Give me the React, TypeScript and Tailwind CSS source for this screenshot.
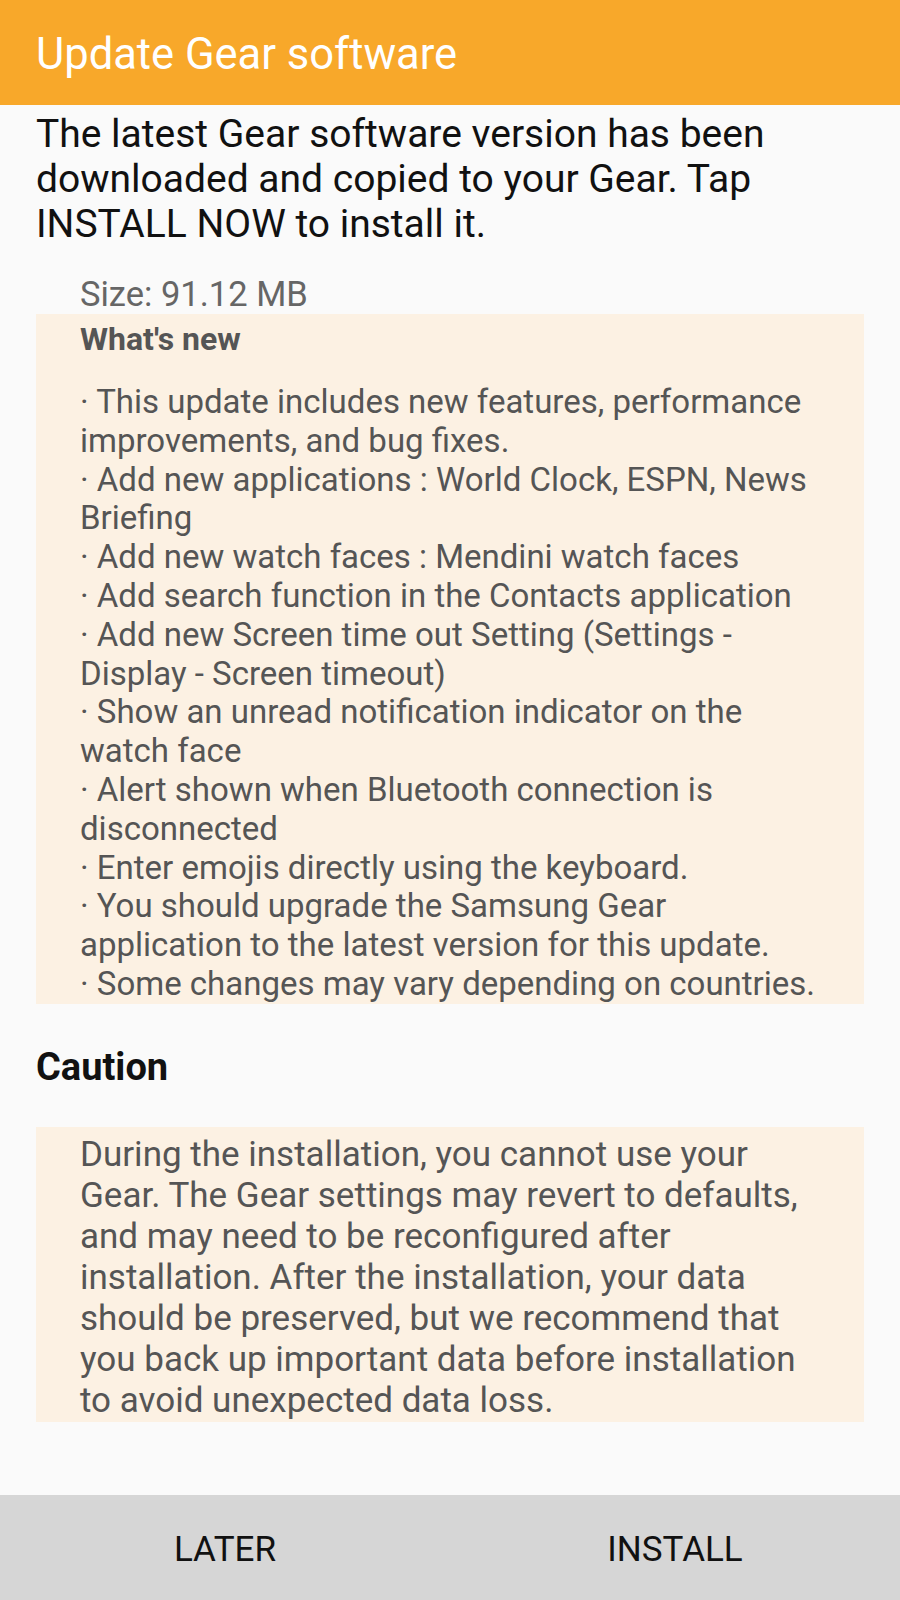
import React from "react";

const bullets = [
  "· This update includes new features, performance",
  "improvements, and bug fixes.",
  "· Add new applications : World Clock, ESPN, News",
  "Briefing",
  "· Add new watch faces : Mendini watch faces",
  "· Add search function in the Contacts application",
  "· Add new Screen time out Setting (Settings -",
  "Display - Screen timeout)",
  "· Show an unread notification indicator on the",
  "watch face",
  "· Alert shown when Bluetooth connection is",
  "disconnected",
  "· Enter emojis directly using the keyboard.",
  "· You should upgrade the Samsung Gear",
  "application to the latest version for this update.",
  "· Some changes may vary depending on countries.",
];

const caution = [
  "During the installation, you cannot use your",
  "Gear. The Gear settings may revert to defaults,",
  "and may need to be reconfigured after",
  "installation. After the installation, your data",
  "should be preserved, but we recommend that",
  "you back up important data before installation",
  "to avoid unexpected data loss.",
];

export default function App() {
  return (
    <div className="w-[900px] h-[1600px] bg-[#fafafa] flex flex-col font-['Roboto',sans-serif] overflow-hidden">
      <header className="h-[105px] bg-[#f8a82a] px-[36px] flex items-center shrink-0">
        <h1 className="text-white text-[43.5px] leading-none pt-[4px]">
          Update Gear software
        </h1>
      </header>
      <main className="flex-1 px-[36px]">
        <p className="mt-[7px] text-[#111111] text-[39px] leading-[45px] whitespace-nowrap">
          The latest Gear software version has been
          <br />
          downloaded and copied to your Gear. Tap
          <br />
          INSTALL NOW to install it.
        </p>
        <div className="mt-[27px] pl-[44px] text-[#666666] text-[34.5px] leading-[40px]">
          Size: 91.12 MB
        </div>
        <section className="bg-[#fcf1e3] pl-[44px] pt-[6px] pb-0 text-[#555555]">
          <div className="text-[32px] leading-[38px] font-bold">What's new</div>
          <div className="mt-[25px] text-[33px] leading-[38.8px] whitespace-nowrap">
            {bullets.map((b, i) => (
              <div key={i}>{b}</div>
            ))}
          </div>
        </section>
        <h2 className="mt-[41px] text-[#111111] text-[38px] leading-[44px] font-bold">
          Caution
        </h2>
        <section className="mt-[38px] bg-[#fcf1e3] pl-[44px] pt-[7px] pb-[1px] text-[#555555] text-[35px] leading-[41px] whitespace-nowrap">
          {caution.map((c, i) => (
            <div key={i}>{c}</div>
          ))}
        </section>
      </main>
      <footer className="h-[105px] bg-[#d6d6d6] grid grid-cols-2 shrink-0 text-[#111111] text-[35px]">
        <div className="flex items-center justify-center pt-[5px]">LATER</div>
        <div className="flex items-center justify-center pt-[5px]">INSTALL</div>
      </footer>
    </div>
  );
}
